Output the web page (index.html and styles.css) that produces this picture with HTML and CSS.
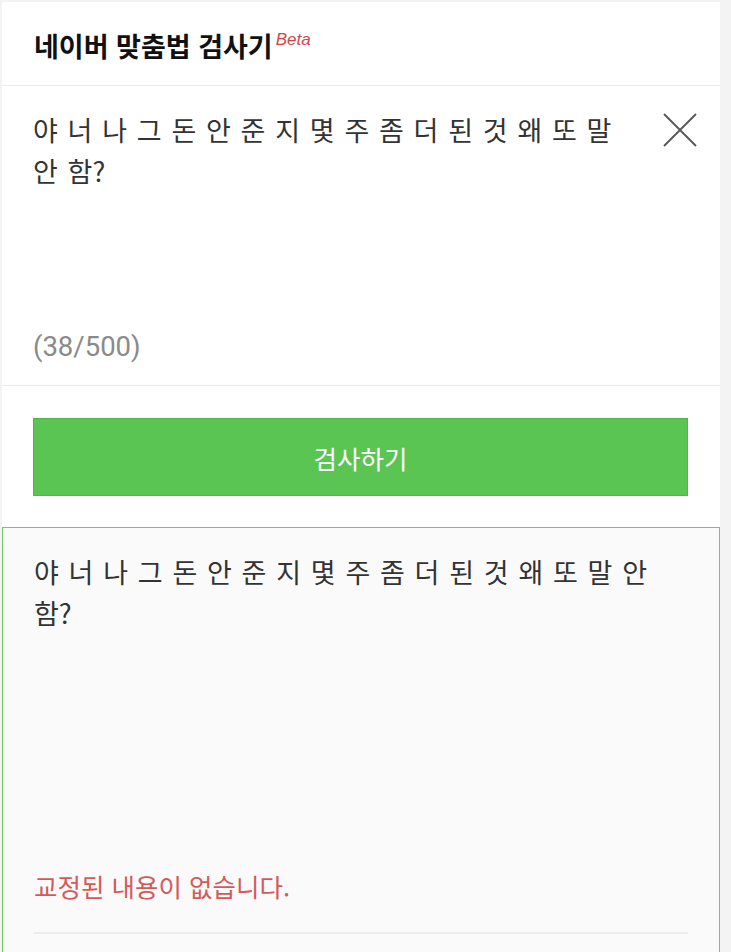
FILE: index.html
```html
<!DOCTYPE html>
<html lang="ko">
<head>
  <meta charset="UTF-8" />
  <meta name="viewport" content="width=device-width, initial-scale=1.0"/>
  <title>네이버 맞춤법 검사기</title>
  <link rel="stylesheet" href="styles.css">
</head>
<body>
  <div class="page">
    <header class="head">
      <h1>네이버 맞춤법 검사기<sup class="beta">Beta</sup></h1>
    </header>

    <section class="input-box">
      <div class="input-row">
        <p class="input-text">야 너 나 그 돈 안 준 지 몇 주 좀 더 된 것 왜 또 말 안 함?</p>
        <button type="button" class="clear" aria-label="지우기">
          <svg width="36" height="36" viewBox="0 0 36 36">
            <path d="M2 2L34 34M34 2L2 34" stroke="#555" stroke-width="1.8" fill="none"/>
          </svg>
        </button>
      </div>
      <div class="counter">(38/500)</div>
    </section>

    <div class="actions">
      <button type="button" class="check">검사하기</button>
    </div>

    <section class="result">
      <p class="result-text">야 너 나 그 돈 안 준 지 몇 주 좀 더 된 것 왜 또 말 안 함?</p>
      <p class="notice">교정된 내용이 없습니다.</p>
      <div class="rule"></div>
    </section>
  </div>
</body>
</html>
```

FILE: styles.css
```css
body {
  margin: 0;
  background: #f3f3f3;
  font-family: "Noto Sans CJK KR", Roboto, sans-serif;
  color: #333;
}
.page {
  margin: 2px 11px 0 2px;
  background: #fff;
  height: 950px;
  overflow: hidden;
}
.head {
  height: 84px;
  border-bottom: 1px solid #ebebeb;
  display: flex;
  align-items: center;
  padding: 3px 0 0 32px;
  box-sizing: border-box;
}
.head h1 {
  margin: 0;
  font-size: 27px;
  font-weight: 700;
  color: #111;
}
.beta {
  font-family: "Liberation Sans", sans-serif;
  font-style: italic;
  font-weight: 400;
  font-size: 17px;
  color: #d04848;
  margin-left: 3px;
  vertical-align: 12px;
}
.input-box {
  height: 300px;
  border-bottom: 1px solid #ebebeb;
  padding: 23px 22px 0 31px;
  box-sizing: border-box;
  display: flex;
  flex-direction: column;
  justify-content: space-between;
}
.input-row {
  display: flex;
  align-items: flex-start;
}
.input-text, .result-text {
  margin: 0;
  font-size: 27px;
  line-height: 41px;
  word-spacing: 2.2px;
  color: #333;
}
.input-text {
  width: 605px;
}
.clear {
  margin: 3px 0 0 25px;
  padding: 0;
  border: 0;
  background: none;
  width: 36px;
  height: 36px;
}
.counter {
  font-family: Roboto, sans-serif;
  font-size: 27.5px;
  color: #8a8a8a;
  line-height: 42px;
  margin-bottom: 17px;
}
.actions {
  padding: 32px 32px 31px 31px;
}
.check {
  display: block;
  width: 100%;
  height: 78px;
  background: #5bc553;
  border: 1px solid #52b54a;
  color: #fff;
  font-family: "Noto Sans CJK KR", sans-serif;
  font-size: 25.5px;
}
.result {
  border: 1px solid #6fcb67;
  background: #fafafa;
  padding: 23px 31px 0 31px;
  height: 500px;
}
.result-text {
  height: 315px;
}
.notice {
  margin: 0;
  font-size: 25.5px;
  line-height: 40px;
  color: #d45a5a;
}
.rule {
  margin-top: 26px;
  border-top: 2px solid #ececec;
}
```
